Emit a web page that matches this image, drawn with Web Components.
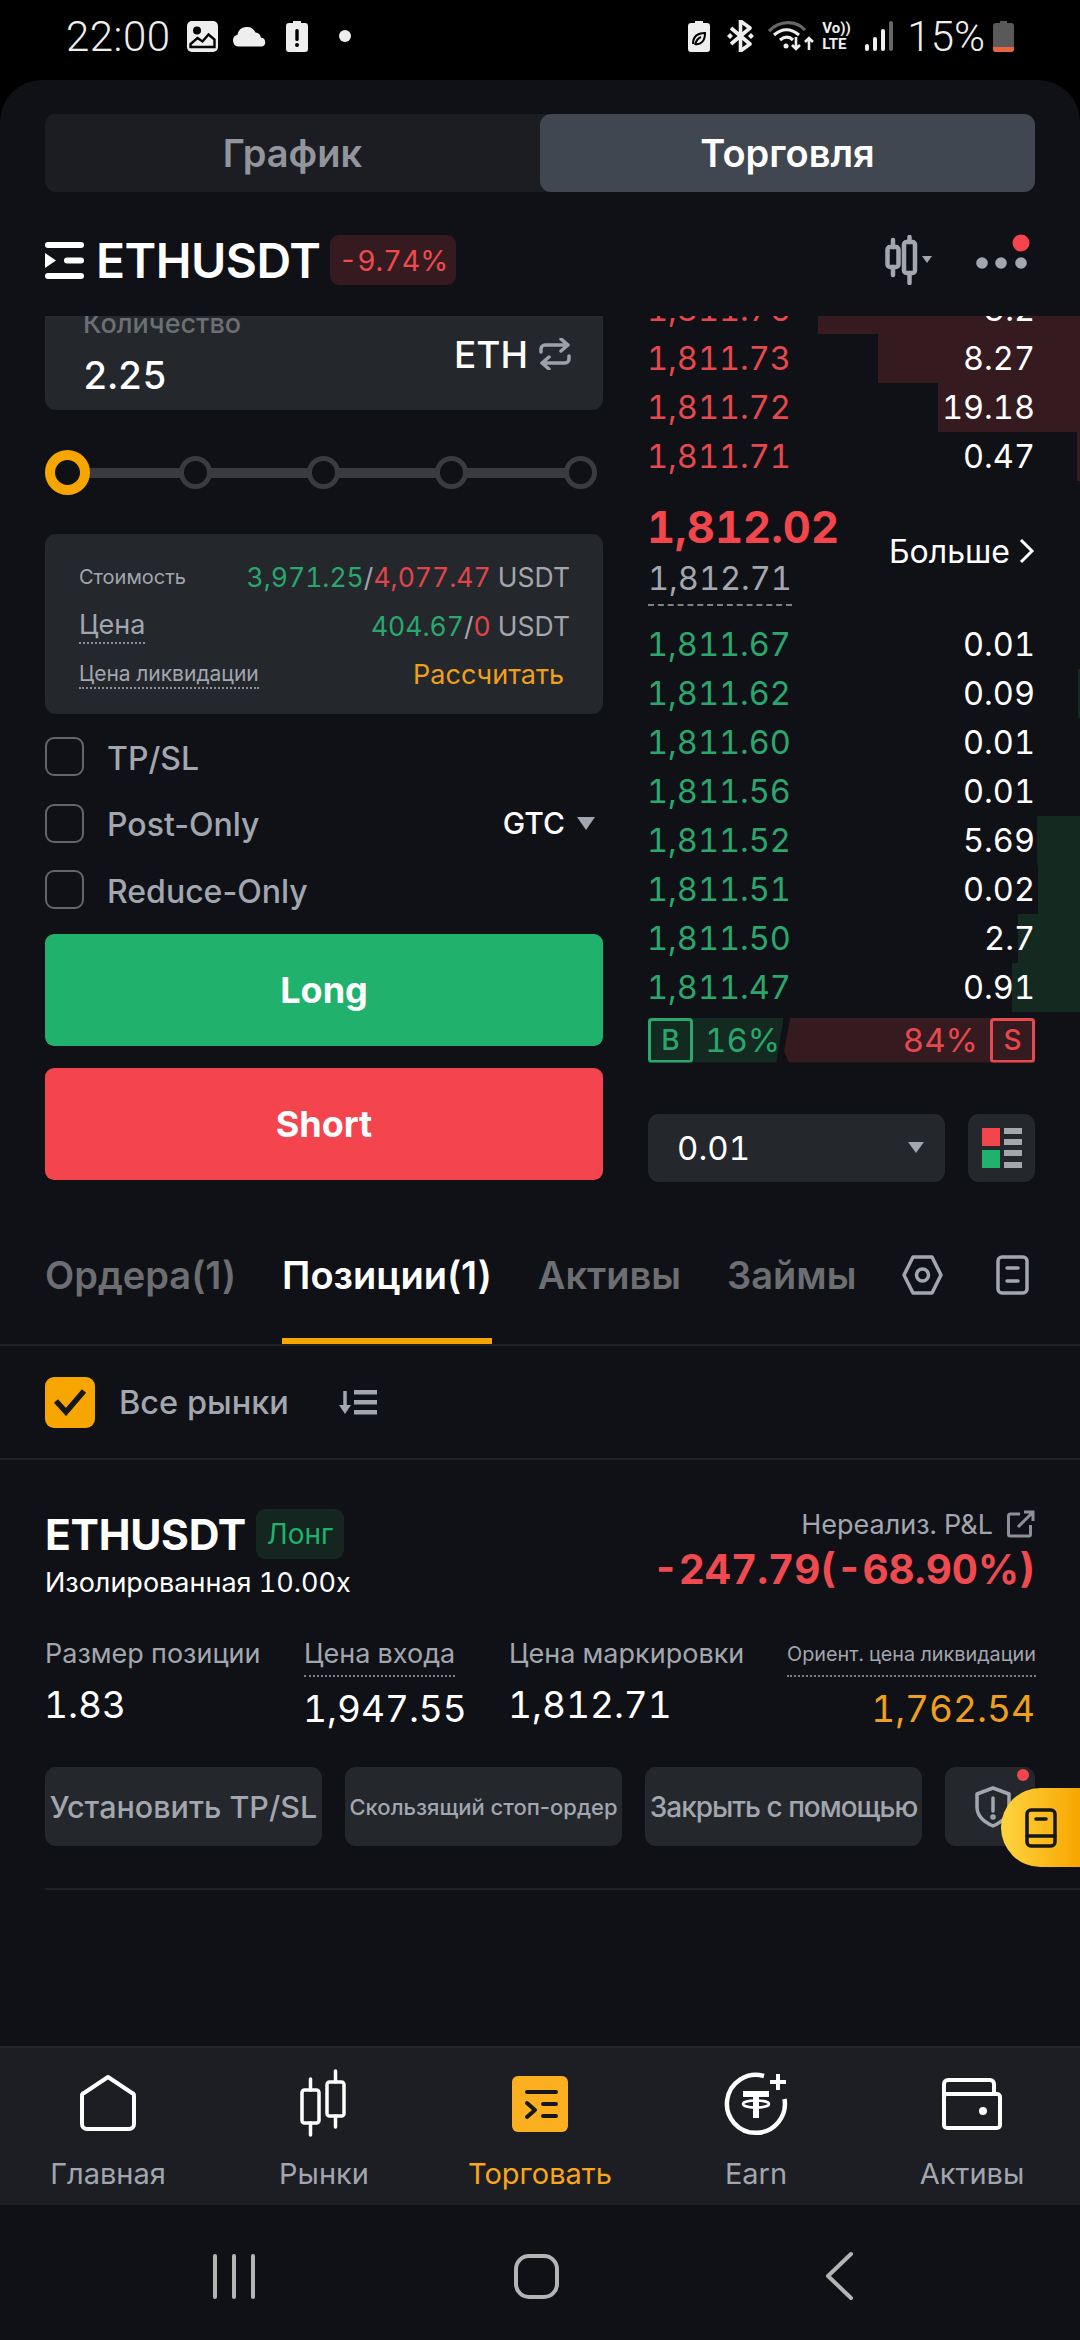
<!DOCTYPE html>
<html lang="ru">
<head>
<meta charset="utf-8">
<title>ETHUSDT</title>
<style>
    html, body { margin: 0; padding: 0; background: #000; }
    body {
        position: relative;
        width: 1080px;
        height: 2340px;
        overflow: hidden;
        display: flex;
        flex-direction: column;
        font-family: Inter, "Noto Sans", "Liberation Sans", sans-serif;
        font-variant-numeric: tabular-nums;
        color: #fff;
    }
    trade-screen { flex: 1; }
</style>
</head>
<body>
<status-bar></status-bar>
<trade-screen>
    <segment-tabs></segment-tabs>
    <pair-header></pair-header>
    <trade-body>
        <order-form slot="left"></order-form>
        <order-book slot="right"></order-book>
    </trade-body>
    <position-tabs></position-tabs>
    <market-filter></market-filter>
    <position-card></position-card>
    <bottom-nav></bottom-nav>
    <system-nav></system-nav>
</trade-screen>
<guide-button></guide-button>

<script>
class StatusBar extends HTMLElement {
    constructor() {
        super();
        this.attachShadow({ mode: 'open' });
    }

    connectedCallback() {
        this.shadowRoot.innerHTML = `
            <style>
                :host {
                    display: flex;
                    align-items: center;
                    height: 80px;
                    padding: 0 66px 8px 66px;
                    box-sizing: border-box;
                    background: #000;
                    color: #eee;
                    font-family: Roboto, sans-serif;
                    font-weight: 300;
                }
                .time { font-size: 42px; width: 103px; margin-right: 18px; letter-spacing: 0.5px; }
                svg { display: block; flex: none; }
                .pct { font-size: 42px; margin-left: 14px; margin-right: 8px; letter-spacing: 0; }
                .volte { font-size: 15px; font-weight: 700; line-height: 16px; width: 32px; margin: 0 11px 0 8px; text-align: left; }
                .spacer { flex: 1; }
            </style>
            <span class="time">22:00</span>
            <svg width="31" height="31" viewBox="0 0 31 31" style="margin-right:14px"><rect width="31" height="31" rx="5" fill="#eee"/><circle cx="10" cy="9.5" r="4" fill="#000"/><path d="M3.5 26v-3l7-6 5 3.500 6-7 6 5v7.500z" fill="none" stroke="#000" stroke-width="2.400"/></svg>
            <svg width="35" height="21" viewBox="0 0 35 21" style="margin-right:19px"><path d="M7 20.500a6 6 0 0 1-1.500-11.800A9.500 9.500 0 0 1 23.500 6.500a6.500 6.500 0 0 1 5.500 5.200 4.500 4.500 0 0 1 1 8.800z" fill="#eee"/></svg>
            <svg width="22" height="31" viewBox="0 0 22 31" style="margin-right:31px"><path d="M7 0h8v2h4a3 3 0 0 1 3 3v23a3 3 0 0 1-3 3H3a3 3 0 0 1-3-3V5a3 3 0 0 1 3-3h4z" fill="#eee"/><rect x="9.300" y="8" width="3.400" height="12" rx="1.500" fill="#000"/><circle cx="11" cy="24" r="2" fill="#000"/></svg>
            <svg width="12" height="12" viewBox="0 0 12 12"><circle cx="6" cy="6" r="6" fill="#eee"/></svg>
            <span class="spacer"></span>
            <svg width="22" height="31" viewBox="0 0 22 31" style="margin-right:17px"><path d="M7 0h8v2h4a3 3 0 0 1 3 3v23a3 3 0 0 1-3 3H3a3 3 0 0 1-3-3V5a3 3 0 0 1 3-3h4z" fill="#eee"/><path d="M5 23c0-7 4-11 12-11 0 8-4 12-10 11M7 24c1-4 3-7 6-8" fill="none" stroke="#000" stroke-width="2"/></svg>
            <svg width="27" height="32" viewBox="0 0 27 32" style="margin-right:14px"><path d="M4 8l19 16-9.500 7V1L23 8 4 24" fill="none" stroke="#eee" stroke-width="3.600" stroke-linejoin="round"/><path d="M0 16l3-3 3 3-3 3zM21 16l3-3 3 3-3 3z" fill="#eee"/></svg>
            <svg width="46" height="32" viewBox="0 0 46 32"><path d="M1 11C12 0 28 0 37 10" fill="none" stroke="#666" stroke-width="3.200"/><path d="M6 15c8-7 17-7 25 0M12 20c5-4 9-4 13 0" fill="none" stroke="#eee" stroke-width="3.200"/><circle cx="18" cy="26" r="2.500" fill="#eee"/><path d="M28 17v12m-4-4l4 4 4-4M41 30V18m-4 4l4-4 4 4" fill="none" stroke="#eee" stroke-width="2.600"/></svg>
            <span class="volte">Vo))<br>LTE</span>
            <svg width="28" height="30" viewBox="0 0 28 30"><rect x="0" y="23" width="4" height="7" rx="2" fill="#eee"/><rect x="8" y="16" width="4" height="14" rx="2" fill="#eee"/><rect x="16" y="8" width="4" height="22" rx="2" fill="#eee"/><rect x="24" y="0" width="4" height="30" rx="2" fill="#666"/></svg>
            <span class="pct">15%</span>
            <svg width="21" height="31" viewBox="0 0 21 31"><path d="M7 0h7v2h4a3 3 0 0 1 3 3v23a3 3 0 0 1-3 3H3a3 3 0 0 1-3-3V5a3 3 0 0 1 3-3h4z" fill="#595959"/><path d="M0 26h21v2a3 3 0 0 1-3 3H3a3 3 0 0 1-3-3z" fill="#e8663f"/></svg>
        `;
    }
}

class TradeScreen extends HTMLElement {
    constructor() {
        super();
        this.attachShadow({ mode: 'open' });
    }

    connectedCallback() {
        this.shadowRoot.innerHTML = `
            <style>
                :host {
                    display: flex;
                    flex-direction: column;
                    background: #101116;
                    border-radius: 42px 42px 0 0;
                    overflow: hidden;
                    min-height: 0;
                }
            </style>
            <slot></slot>
        `;
    }
}

class SegmentTabs extends HTMLElement {
    constructor() {
        super();
        this.attachShadow({ mode: 'open' });
    }

    connectedCallback() {
        this.shadowRoot.innerHTML = `
            <style>
                :host {
                    display: grid;
                    grid-template-columns: 1fr 1fr;
                    margin: 34px 45px 0;
                    height: 78px;
                    border-radius: 11px;
                    background: #1c1d23;
                    font-size: 38px;
                    font-weight: 600;
                    color: #92969c;
                }
                div { display: flex; align-items: center; justify-content: center; border-radius: 11px; }
                .on { background: #404751; color: #fff; }
            </style>
            <div>График</div>
            <div class="on">Торговля</div>
        `;
    }
}

class PairHeader extends HTMLElement {
    constructor() {
        super();
        this.attachShadow({ mode: 'open' });
    }

    connectedCallback() {
        this.shadowRoot.innerHTML = `
            <style>
                :host {
                    display: flex;
                    align-items: center;
                    height: 124px;
                    padding: 12px 45px 0;
                    box-sizing: border-box;
                }
                .name { font-size: 48px; font-weight: 600; margin-left: 12px; letter-spacing: -0.5px; }
                .badge {
                    margin-left: 10px;
                    height: 50px;
                    width: 126px;
                    border-radius: 9px;
                    background: #351a1f;
                    color: #ee4a50;
                    font-size: 28.500px;
                    display: flex;
                    align-items: center;
                    justify-content: center;
                }
                .right { margin-left: auto; display: flex; align-items: center; }
                svg { display: block; }
            </style>
            <svg width="39" height="37" viewBox="0 0 39 37"><rect y="0" width="39" height="6" rx="3" fill="#fff"/><rect y="31" width="39" height="6" rx="3" fill="#fff"/><rect x="19" y="15.500" width="20" height="6" rx="3" fill="#fff"/><path d="M0 11l11 7.500L0 26z" fill="#fff"/></svg>
            <span class="name">ETHUSDT</span>
            <span class="badge">-9.74%</span>
            <div class="right">
                <svg width="50" height="50" viewBox="0 0 50 50" style="margin-right:40px"><g fill="none" stroke="#a3a7ad" stroke-width="4.500" stroke-linecap="round"><rect x="2.500" y="12" width="11" height="20" rx="2.500"/><path d="M8 5v7M8 32v8"/><rect x="19" y="7" width="11" height="31" rx="2.500"/><path d="M24.500 2v5M24.500 38v10"/></g><path d="M37 21h10l-5 7z" fill="#a3a7ad"/></svg>
                <svg width="60" height="52" viewBox="0 0 60 52"><circle cx="7" cy="29" r="5.800" fill="#a3a7ad"/><circle cx="26" cy="29" r="5.800" fill="#a3a7ad"/><circle cx="46" cy="29" r="5.800" fill="#a3a7ad"/><circle cx="46" cy="9" r="8.500" fill="#f4454e"/></svg>
            </div>
        `;
    }
}

class TradeBody extends HTMLElement {
    constructor() {
        super();
        this.attachShadow({ mode: 'open' });
    }

    connectedCallback() {
        this.shadowRoot.innerHTML = `
            <style>
                :host {
                    display: grid;
                    grid-template-columns: 558px 387px;
                    column-gap: 45px;
                    height: 916px;
                    padding: 0 45px;
                    overflow: hidden;
                    align-items: start;
                }
            </style>
            <slot name="left"></slot>
            <slot name="right"></slot>
        `;
    }
}

class CheckRow extends HTMLElement {
    constructor() {
        super();
        this.attachShadow({ mode: 'open' });
    }

    connectedCallback() {
        this.shadowRoot.innerHTML = `
            <style>
                :host {
                    display: flex;
                    align-items: center;
                    height: 39px;
                    font-size: 32px;
                    font-weight: 500;
                    font-variant-numeric: normal;
                    color: #a2a6ae;
                }
                .box {
                    width: 39px;
                    height: 39px;
                    box-sizing: border-box;
                    border: 2.500px solid #63656a;
                    border-radius: 9px;
                    margin-right: 23px;
                    flex: none;
                }
                .text { padding-top: 3px; }
                .end { margin-left: auto; display: flex; align-items: center; }
            </style>
            <span class="box"></span>
            <span class="text"><slot></slot></span>
            <span class="end"><slot name="end"></slot></span>
        `;
    }
}

class OrderForm extends HTMLElement {
    constructor() {
        super();
        this.attachShadow({ mode: 'open' });
    }

    connectedCallback() {
        const knobs = [0, 1, 2, 3].map(() => '<span class="knob"></span>').join('');
        this.shadowRoot.innerHTML = `
            <style>
                :host { display: block; color: #fff; }
                .qty {
                    margin-top: -50px;
                    height: 144px;
                    box-sizing: border-box;
                    padding: 43px 32px 0 38px;
                    background: #24272c;
                    border-radius: 0 0 11px 11px;
                    display: grid;
                    grid-template-columns: 1fr auto;
                    align-items: center;
                    align-content: start;
                }
                .qty .lbl { font-size: 27px; color: #6c6f74; line-height: 30px; font-weight: 500; grid-column: 1 / 3; }
                .qty .val { font-size: 38px; line-height: 46px; margin-top: 13px; font-weight: 500; }
                .qty .unit { display: flex; align-items: center; font-size: 37px; font-weight: 500; margin-top: -29px; }
                .qty .unit svg { margin-left: 11px; }
                .slider {
                    margin-top: 40px;
                    width: 552px;
                    height: 45px;
                    display: flex;
                    align-items: center;
                    background: linear-gradient(#3a3b3f, #3a3b3f) 10px 17.500px / 532px 10px no-repeat;
                }
                .start {
                    width: 45px; height: 45px; border-radius: 50%;
                    box-sizing: border-box;
                    border: 10px solid #f7a600;
                    background: #101116;
                    flex: none;
                }
                .knob {
                    width: 33px; height: 33px; border-radius: 50%;
                    box-sizing: border-box;
                    border: 5px solid #3a3b3f;
                    background: #101116;
                    flex: none;
                    margin-left: 95.200px;
                }
                .start + .knob { margin-left: 89px; }
                .info {
                    margin-top: 39px;
                    height: 180px;
                    box-sizing: border-box;
                    background: #24272c;
                    border-radius: 11px;
                    padding: 18px 33px 0 34px;
                    display: grid;
                    grid-auto-rows: 49px;
                    align-items: center;
                    color: #a2a6ae;
                }
                .line { display: flex; align-items: center; justify-content: space-between; }
                .small { font-size: 20px; }
                .mid { font-size: 26.500px; }
                .name { font-size: 27px; }
                .liq { font-size: 21px; }
                .dash { border-bottom: 2px dotted #8b8e94; padding-bottom: 1px; }
                .green { color: #2aa76d; }
                .red { color: #e0454b; }
                .amber { color: #efa01a; font-size: 27px; margin-right: 6px; }
                .checks { margin-top: 23px; display: grid; row-gap: 27.500px; }
                .btn {
                    height: 112px;
                    border-radius: 9px;
                    display: flex;
                    align-items: center;
                    justify-content: center;
                    font-size: 36px;
                    font-weight: 700;
                    color: #fff;
                }
                .long { margin-top: 25px; background: #20b26c; }
                .short { margin-top: 22px; background: #f4454e; }
            </style>
            <div class="qty">
                <div class="lbl">Количество</div>
                <div class="val">2.25</div>
                <div class="unit">ETH
                    <svg width="32" height="32" viewBox="0 0 32 32" fill="none" stroke="#9ea2a8" stroke-width="3.500" stroke-linecap="round" stroke-linejoin="round"><path d="M2 14v-3a4 4 0 0 1 4-4h23M22 1l7 6-7 6M30 18v3a4 4 0 0 1-4 4H3M10 31l-7-6 7-6"/></svg>
                </div>
            </div>
            <div class="slider">
                <span class="start"></span>${knobs}
            </div>
            <div class="info">
                <div class="line">
                    <span class="small">Стоимость</span>
                    <span class="mid"><span class="green">3,971.25</span>/<span class="red">4,077.47</span> USDT</span>
                </div>
                <div class="line">
                    <span class="name dash">Цена</span>
                    <span class="mid"><span class="green">404.67</span>/<span class="red">0</span> USDT</span>
                </div>
                <div class="line">
                    <span class="liq dash">Цена ликвидации</span>
                    <span class="amber">Рассчитать</span>
                </div>
            </div>
            <div class="checks">
                <check-row>TP/SL</check-row>
                <check-row>Post-Only
                    <span slot="end" style="color:#fff;font-size:30px;font-weight:500">GTC</span>
                    <svg slot="end" style="margin-left:12px;margin-right:8px;display:block" width="18" height="13" viewBox="0 0 18 13"><path d="M0 0h18l-9 13z" fill="#a2a6ae"/></svg>
                </check-row>
                <check-row>Reduce-Only</check-row>
            </div>
            <div class="btn long">Long</div>
            <div class="btn short">Short</div>
        `;
    }
}

class BookRow extends HTMLElement {
    constructor() {
        super();
        this.attachShadow({ mode: 'open' });
    }

    connectedCallback() {
        const side = this.getAttribute('side') || 'ask';
        const depth = this.getAttribute('depth') || '0';
        const price = this.getAttribute('price') || '';
        const qty = this.getAttribute('qty') || '';
        this.shadowRoot.innerHTML = `
            <style>
                :host {
                    display: flex;
                    position: relative;
                    justify-content: space-between;
                    align-items: center;
                    height: 49px;
                    font-size: 32.500px;
                }
                .bar { position: absolute; top: 0; bottom: 0; right: -45px; }
                .bar.ask { background: #351a1f; }
                .bar.bid { background: #14291f; }
                span { position: relative; }
                .price { margin-left: -1px; }
                .price.ask { color: #e5484d; }
                .price.bid { color: #2aa76d; }
                .qty { color: #fff; }
            </style>
            <div class="bar ${side}" style="width:${depth}px"></div>
            <span class="price ${side}">${price}</span>
            <span class="qty">${qty}</span>
        `;
    }
}

class OrderBook extends HTMLElement {
    constructor() {
        super();
        this.attachShadow({ mode: 'open' });
    }

    connectedCallback() {
        this.shadowRoot.innerHTML = `
            <style>
                :host { display: block; }
                .asks { margin-top: -31px; }
                .mid {
                    height: 139px;
                    display: flex;
                    justify-content: space-between;
                    box-sizing: border-box;
                    padding-top: 21px;
                }
                .last { font-size: 43.500px; font-weight: 700; color: #f0464c; line-height: 50px; margin-left: -1px; }
                .mark { font-size: 32.500px; color: #a2a6ae; line-height: 44px; margin-top: 5px; display: inline-block; border-bottom: 2px dashed #7f8187; padding-bottom: 3px; }
                .more { font-size: 32px; display: flex; align-items: center; height: 48px; margin-top: 25px; }
                .more svg { margin-left: 9px; }
                .ratio { margin-top: 5.500px; height: 45px; display: flex; position: relative; font-size: 33px; }
                .buy {
                    width: 135px; background: #14291f; color: #2aa76d;
                    display: flex; align-items: center;
                    clip-path: polygon(0 0, 100% 0, 100% 10%, 95% 100%, 0 100%);
                }
                .sell {
                    flex: 1; margin-left: 1px; background: #351a1f; color: #e5484d;
                    display: flex; align-items: center; justify-content: flex-end;
                    clip-path: polygon(2.500% 0, 100% 0, 100% 100%, 2% 100%, 0 75%);
                }
                .tag {
                    width: 45px; height: 45px; box-sizing: border-box;
                    border: 3px solid currentColor; border-radius: 4px;
                    display: flex; align-items: center; justify-content: center;
                    font-size: 28px; font-weight: 500;
                }
                .buy .tag { margin-right: 12px; }
                .sell .tag { margin-left: 12px; }
                .tools { margin-top: 51px; display: flex; justify-content: space-between; }
                .step {
                    width: 297px; height: 68px; box-sizing: border-box;
                    padding: 0 21px 0 29px;
                    border-radius: 11px; background: #24272c;
                    display: flex; align-items: center; justify-content: space-between;
                    font-size: 33px;
                }
                .layout {
                    width: 67px; height: 68px; border-radius: 11px; background: #24272c;
                    display: flex; align-items: center; justify-content: center;
                }
            </style>
            <div class="asks">
                <book-row side="ask" depth="262" price="1,811.76" qty="3.2"></book-row>
                <book-row side="ask" depth="202" price="1,811.73" qty="8.27"></book-row>
                <book-row side="ask" depth="142" price="1,811.72" qty="19.18"></book-row>
                <book-row side="ask" depth="3" price="1,811.71" qty="0.47"></book-row>
            </div>
            <div class="mid">
                <div>
                    <div class="last">1,812.02</div>
                    <div class="mark">1,812.71</div>
                </div>
                <div class="more">Больше
                    <svg width="16" height="26" viewBox="0 0 16 26" fill="none" stroke="#fff" stroke-width="3"><path d="M2 2l11 11L2 24"/></svg>
                </div>
            </div>
            <div class="bids">
                <book-row side="bid" depth="0" price="1,811.67" qty="0.01"></book-row>
                <book-row side="bid" depth="2" price="1,811.62" qty="0.09"></book-row>
                <book-row side="bid" depth="0" price="1,811.60" qty="0.01"></book-row>
                <book-row side="bid" depth="0" price="1,811.56" qty="0.01"></book-row>
                <book-row side="bid" depth="43" price="1,811.52" qty="5.69"></book-row>
                <book-row side="bid" depth="42" price="1,811.51" qty="0.02"></book-row>
                <book-row side="bid" depth="62" price="1,811.50" qty="2.7"></book-row>
                <book-row side="bid" depth="68" price="1,811.47" qty="0.91"></book-row>
            </div>
            <div class="ratio">
                <div class="buy"><span class="tag">B</span>16%</div>
                <div class="sell">84%<span class="tag">S</span></div>
            </div>
            <div class="tools">
                <div class="step">0.01
                    <svg width="16" height="11" viewBox="0 0 16 11"><path d="M0 0h16l-8 11z" fill="#a2a6ae"/></svg>
                </div>
                <div class="layout">
                    <svg width="40" height="40" viewBox="0 0 40 40"><rect width="18" height="18" fill="#f0464c"/><rect y="22" width="18" height="18" fill="#20b26c"/><g fill="#a6a7aa"><rect x="22" width="18" height="6"/><rect x="22" y="11" width="18" height="6"/><rect x="22" y="22" width="18" height="6"/><rect x="22" y="34" width="18" height="6"/></g></svg>
                </div>
            </div>
        `;
    }
}

class PositionTabs extends HTMLElement {
    constructor() {
        super();
        this.attachShadow({ mode: 'open' });
    }

    connectedCallback() {
        this.shadowRoot.innerHTML = `
            <style>
                :host {
                    display: flex;
                    height: 114px;
                    box-sizing: border-box;
                    padding: 0 51px 0 45px;
                    border-bottom: 2px solid #202126;
                    font-size: 38px;
                    font-weight: 600;
                    font-variant-numeric: normal;
                    color: #6c6e72;
                }
                .tab {
                    height: 112px;
                    box-sizing: border-box;
                    padding-top: 20px;
                    line-height: 46px;
                    margin-right: 46px;
                    white-space: nowrap;
                }
                .on { color: #fff; border-bottom: 6px solid #f7a600; }
                .icons { margin-left: auto; display: flex; align-items: flex-start; padding-top: 23px; }
                svg { display: block; }
            </style>
            <div class="tab">Ордера(1)</div>
            <div class="tab on">Позиции(1)</div>
            <div class="tab">Активы</div>
            <div class="tab" style="margin-right:0">Займы</div>
            <div class="icons">
                <svg width="41" height="40" viewBox="0 0 41 40" fill="none" stroke="#a3a7ad" stroke-width="3.500" style="margin-right:53px"><path d="M11 2h19l9 18-9 18H11L2 20z" stroke-linejoin="round"/><circle cx="20.500" cy="20" r="6"/></svg>
                <svg width="33" height="40" viewBox="0 0 33 40" fill="none" stroke="#a3a7ad" stroke-width="3.500" stroke-linecap="round"><rect x="2" y="2" width="29" height="36" rx="4"/><path d="M11 13h11M11 26h11"/></svg>
            </div>
        `;
    }
}

class MarketFilter extends HTMLElement {
    constructor() {
        super();
        this.attachShadow({ mode: 'open' });
    }

    connectedCallback() {
        this.shadowRoot.innerHTML = `
            <style>
                :host {
                    display: flex;
                    align-items: center;
                    height: 114px;
                    box-sizing: border-box;
                    padding: 0 45px;
                    border-bottom: 2px solid #202126;
                    font-size: 32.500px;
                    font-weight: 500;
                    color: #a2a6ae;
                }
                .box {
                    width: 50px; height: 51px; border-radius: 9px; background: #f7a600;
                    display: flex; align-items: center; justify-content: center;
                    margin-right: 24px;
                }
                svg { display: block; }
            </style>
            <span class="box"><svg width="34" height="28" viewBox="0 0 34 28" fill="none" stroke="#16171b" stroke-width="5.500"><path d="M3 13l10 11L31 3"/></svg></span>
            <span>Все рынки</span>
            <svg width="38" height="26" viewBox="0 0 38 26" style="margin-left:50px"><path d="M6 2v16" stroke="#a2a6ae" stroke-width="3.500" fill="none"/><path d="M0 16h12l-6 9z" fill="#a2a6ae"/><g fill="#a2a6ae"><rect x="15" y="1" width="23" height="4.500"/><rect x="15" y="11" width="23" height="4.500"/><rect x="15" y="21" width="23" height="4.500"/></g></svg>
        `;
    }
}

class StatCell extends HTMLElement {
    constructor() {
        super();
        this.attachShadow({ mode: 'open' });
    }

    connectedCallback() {
        const dashed = this.hasAttribute('dashed');
        const label = this.getAttribute('label') || '';
        this.shadowRoot.innerHTML = `
            <style>
                :host { display: block; min-width: 0; }
                .label {
                    display: inline-block;
                    font-size: var(--label-size, 27px);
                    line-height: 36px;
                    color: #a2a6ae;
                    white-space: nowrap;
                }
                .label.dashed { border-bottom: 2px dotted #7f8187; padding-bottom: 3px; }
                .value { font-size: 37px; line-height: 48px; margin-top: ${dashed ? 8 : 9}px; margin-left: -1px; color: var(--value-color, #fff); white-space: nowrap; }
            </style>
            <div><span class="label ${dashed ? 'dashed' : ''}">${label}</span></div>
            <div class="value"><slot></slot></div>
        `;
    }
}

class PositionCard extends HTMLElement {
    constructor() {
        super();
        this.attachShadow({ mode: 'open' });
    }

    connectedCallback() {
        this.shadowRoot.innerHTML = `
            <style>
                :host {
                    display: block;
                    height: 430px;
                    box-sizing: border-box;
                    margin: 0;
                    padding: 49px 45px 0;
                    position: relative;
                }
                :host::after {
                    content: "";
                    position: absolute;
                    left: 45px; right: 0; bottom: 0;
                    height: 2px;
                    background: #202126;
                }
                .head { display: flex; justify-content: space-between; height: 92px; }
                .title { display: flex; align-items: center; height: 50px; }
                .name { font-size: 42.600px; font-weight: 700; letter-spacing: -0.3px; }
                .side {
                    margin-left: 10px; width: 88px; height: 50px; border-radius: 9px;
                    background: #14261f; color: #20b26c; font-size: 28px;
                    display: flex; align-items: center; justify-content: center;
                }
                .sub { font-size: 27px; line-height: 36px; margin-top: 6px; white-space: nowrap; }
                .pnl { text-align: right; margin-top: -3px; }
                .pnl-top { display: flex; justify-content: flex-end; align-items: center; height: 36px; font-size: 27px; color: #a2a6ae; }
                .pnl-top svg { margin-left: 14px; }
                .pnl-val { font-size: 40.500px; line-height: 52px; font-weight: 700; color: #ee4a50; margin-top: 2px; white-space: nowrap; }
                .stats { display: grid; grid-template-columns: 259px 205px 278px minmax(0, 1fr); margin-top: 35px; }
                .liq { --label-size: 19.800px; --value-color: #efa01a; text-align: right; }
                .actions { display: grid; grid-template-columns: 277px 277px 277px 90px; column-gap: 23px; margin-top: 34px; }
                .act {
                    height: 79px; border-radius: 11px; background: #24272c; color: #a2a6ae;
                    display: flex; align-items: center; justify-content: center;
                    font-size: 30.500px; font-weight: 500; white-space: nowrap; overflow: hidden;
                    font-variant-numeric: normal;
                }
                .act.tiny { font-size: 22px; }
                .act.close { font-size: 28px; letter-spacing: -1px; }
                .shield { position: relative; overflow: visible; justify-content: flex-start; padding-left: 29px; box-sizing: border-box; }
                .dot { position: absolute; right: 6px; top: 2px; width: 12px; height: 12px; border-radius: 50%; background: #f4454e; }
            </style>
            <div class="head">
                <div>
                    <div class="title"><span class="name">ETHUSDT</span><span class="side">Лонг</span></div>
                    <div class="sub">Изолированная 10.00x</div>
                </div>
                <div class="pnl">
                    <div class="pnl-top">Нереализ. P&amp;L
                        <svg width="28" height="28" viewBox="0 0 28 28" fill="none" stroke="#8d9096" stroke-width="3"><path d="M13 4H3a1.500 1.500 0 0 0-1.500 1.500v19A1.500 1.500 0 0 0 3 26h19a1.500 1.500 0 0 0 1.500-1.500V15M11 17L26 2M17 2h9v9"/></svg>
                    </div>
                    <div class="pnl-val">-247.79(-68.90%)</div>
                </div>
            </div>
            <div class="stats">
                <stat-cell label="Размер позиции">1.83</stat-cell>
                <stat-cell label="Цена входа" dashed>1,947.55</stat-cell>
                <stat-cell label="Цена маркировки">1,812.71</stat-cell>
                <stat-cell class="liq" label="Ориент. цена ликвидации" dashed>1,762.54</stat-cell>
            </div>
            <div class="actions">
                <div class="act">Установить TP/SL</div>
                <div class="act tiny">Скользящий стоп-ордер</div>
                <div class="act close">Закрыть с помощью</div>
                <div class="act shield">
                    <svg width="38" height="42" viewBox="0 0 38 42" fill="none" stroke="#a2a6ae" stroke-width="3.500"><path d="M19 2l16 6v13c0 9-7 15-16 19C10 36 3 30 3 21V8z" stroke-linejoin="round"/><path d="M19 12v13" stroke-linecap="round"/><circle cx="19" cy="31" r="1" fill="#a2a6ae"/></svg>
                    <span class="dot"></span>
                </div>
            </div>
        `;
    }
}

class GuideButton extends HTMLElement {
    constructor() {
        super();
        this.attachShadow({ mode: 'open' });
    }

    connectedCallback() {
        this.shadowRoot.innerHTML = `
            <style>
                :host {
                    position: absolute;
                    top: 1788px;
                    right: 0;
                    width: 79px;
                    height: 79px;
                    border-radius: 40px 0 0 40px;
                    background: linear-gradient(90deg, #ffd440, #f7a600);
                    display: flex;
                    align-items: center;
                    padding-left: 24px;
                    box-sizing: border-box;
                }
            </style>
            <svg width="32" height="40" viewBox="0 0 32 40" fill="none" stroke="#16171b" stroke-width="3.500"><rect x="2" y="2" width="28" height="36" rx="4"/><path d="M2 28h28M11 11h10" stroke-linecap="round"/></svg>
        `;
    }
}

class NavItem extends HTMLElement {
    constructor() {
        super();
        this.attachShadow({ mode: 'open' });
    }

    connectedCallback() {
        const on = this.hasAttribute('active');
        this.shadowRoot.innerHTML = `
            <style>
                :host {
                    display: flex;
                    flex-direction: column;
                    align-items: center;
                    font-size: 29px;
                    color: ${on ? '#f9a61a' : '#a2a6ae'};
                }
                .icon { height: 72px; width: 72px; margin-top: 20px; }
                .label { margin-top: 14px; line-height: 40px; white-space: nowrap; }
            </style>
            <div class="icon"><slot name="icon"></slot></div>
            <div class="label"><slot></slot></div>
        `;
    }
}

class BottomNav extends HTMLElement {
    constructor() {
        super();
        this.attachShadow({ mode: 'open' });
    }

    connectedCallback() {
        this.shadowRoot.innerHTML = `
            <style>
                :host {
                    display: grid;
                    grid-template-columns: repeat(5, 216px);
                    height: 159px;
                    box-sizing: border-box;
                    margin-top: 156px;
                    border-top: 2px solid #25272c;
                    background: #1c1e24;
                }
            </style>
            <nav-item>
                <svg slot="icon" width="72" height="72" viewBox="0 0 72 72" fill="none" stroke="#fff" stroke-width="4" stroke-linejoin="round"><path d="M36 9L60 25a3 3 0 0 1 2 3V56a5 5 0 0 1-5 5H15a5 5 0 0 1-5-5V28a3 3 0 0 1 2-3z"/></svg>
                Главная
            </nav-item>
            <nav-item>
                <svg slot="icon" width="72" height="72" viewBox="0 0 72 72" fill="none" stroke="#fff" stroke-width="3.500" stroke-linecap="round"><rect x="14" y="22" width="17" height="33" rx="2.500"/><path d="M22.500 11v11M22.500 55v12"/><rect x="39" y="14" width="17" height="34" rx="2.500"/><path d="M47.500 3v11M47.500 48v11"/></svg>
                Рынки
            </nav-item>
            <nav-item active>
                <svg slot="icon" width="72" height="72" viewBox="0 0 72 72" fill="none"><rect x="8" y="8" width="56" height="56" rx="6" fill="#fdb01f"/><path d="M23 24h29M39 36h13M39 48h13M23 35l8 7-8 7" stroke="#16171b" stroke-width="4" stroke-linecap="round" stroke-linejoin="round"/></svg>
                Торговать
            </nav-item>
            <nav-item>
                <svg slot="icon" width="72" height="72" viewBox="0 0 72 72" fill="none" stroke="#fff"><path d="M44 8A29 29 0 1 0 64.500 31" stroke-width="4.500"/><path d="M58 6v16M50 14h16" stroke-width="4"/><path d="M23 23h26v6H39v21h-6V29H23z" fill="#fff" stroke="none"/><ellipse cx="36" cy="36" rx="13" ry="3.500" stroke-width="2.500"/></svg>
                Earn
            </nav-item>
            <nav-item>
                <svg slot="icon" width="72" height="72" viewBox="0 0 72 72" fill="none" stroke="#fff" stroke-width="4" stroke-linejoin="round"><path d="M8 28V16a4 4 0 0 1 4-4h42a4 4 0 0 1 4 4v10"/><rect x="8" y="26" width="56" height="34" rx="3"/><circle cx="47" cy="43" r="2" fill="#fff"/></svg>
                Активы
            </nav-item>
        `;
    }
}

class SystemNav extends HTMLElement {
    constructor() {
        super();
        this.attachShadow({ mode: 'open' });
    }

    connectedCallback() {
        this.shadowRoot.innerHTML = `
            <style>
                :host { display: block; height: 135px; }
                svg { display: block; }
            </style>
            <svg width="1080" height="135" viewBox="0 0 1080 135" fill="none" stroke="#b4b4b4" stroke-width="4" stroke-linecap="round" stroke-linejoin="round">
                <path d="M215 51v41M234 51v41M253 51v41"/>
                <rect x="516" y="51" width="41" height="41" rx="13"/>
                <path d="M851 50L828 72l23 22" transform="translate(0,-1)"/>
            </svg>
        `;
    }
}

customElements.define('status-bar', StatusBar);
customElements.define('trade-screen', TradeScreen);
customElements.define('segment-tabs', SegmentTabs);
customElements.define('pair-header', PairHeader);
customElements.define('trade-body', TradeBody);
customElements.define('check-row', CheckRow);
customElements.define('order-form', OrderForm);
customElements.define('book-row', BookRow);
customElements.define('order-book', OrderBook);
customElements.define('position-tabs', PositionTabs);
customElements.define('market-filter', MarketFilter);
customElements.define('stat-cell', StatCell);
customElements.define('position-card', PositionCard);
customElements.define('guide-button', GuideButton);
customElements.define('nav-item', NavItem);
customElements.define('bottom-nav', BottomNav);
customElements.define('system-nav', SystemNav);
</script>
</body>
</html>
